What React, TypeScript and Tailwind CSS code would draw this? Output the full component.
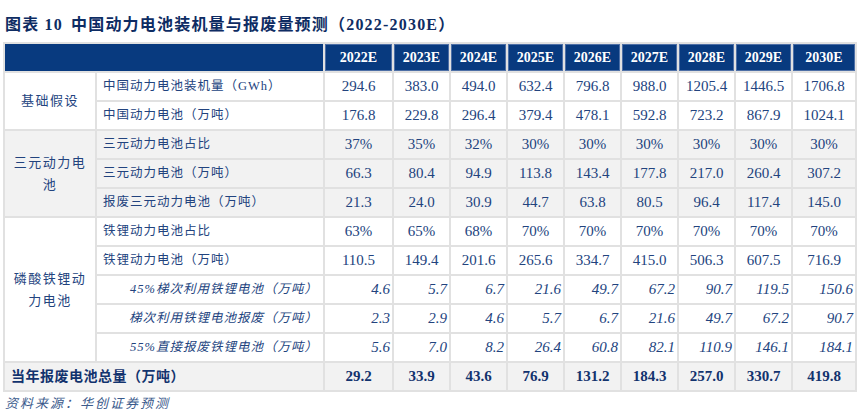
const years = ["2022E", "2023E", "2024E", "2025E", "2026E", "2027E", "2028E", "2029E", "2030E"]

type Row = { label: string; values: string[]; italic?: boolean }
type Group = { name: string[]; shaded: boolean; rows: Row[] }

const groups: Group[] = [
  {
    name: ["基础假设"],
    shaded: false,
    rows: [
      { label: "中国动力电池装机量（GWh）", values: ["294.6", "383.0", "494.0", "632.4", "796.8", "988.0", "1205.4", "1446.5", "1706.8"] },
      { label: "中国动力电池（万吨）", values: ["176.8", "229.8", "296.4", "379.4", "478.1", "592.8", "723.2", "867.9", "1024.1"] },
    ],
  },
  {
    name: ["三元动力电", "池"],
    shaded: true,
    rows: [
      { label: "三元动力电池占比", values: ["37%", "35%", "32%", "30%", "30%", "30%", "30%", "30%", "30%"] },
      { label: "三元动力电池（万吨）", values: ["66.3", "80.4", "94.9", "113.8", "143.4", "177.8", "217.0", "260.4", "307.2"] },
      { label: "报废三元动力电池（万吨）", values: ["21.3", "24.0", "30.9", "44.7", "63.8", "80.5", "96.4", "117.4", "145.0"] },
    ],
  },
  {
    name: ["磷酸铁锂动", "力电池"],
    shaded: false,
    rows: [
      { label: "铁锂动力电池占比", values: ["63%", "65%", "68%", "70%", "70%", "70%", "70%", "70%", "70%"] },
      { label: "铁锂动力电池（万吨）", values: ["110.5", "149.4", "201.6", "265.6", "334.7", "415.0", "506.3", "607.5", "716.9"] },
      { label: "45%梯次利用铁锂电池（万吨）", italic: true, values: ["4.6", "5.7", "6.7", "21.6", "49.7", "67.2", "90.7", "119.5", "150.6"] },
      { label: "梯次利用铁锂电池报废（万吨）", italic: true, values: ["2.3", "2.9", "4.6", "5.7", "6.7", "21.6", "49.7", "67.2", "90.7"] },
      { label: "55%直接报废铁锂电池（万吨）", italic: true, values: ["5.6", "7.0", "8.2", "26.4", "60.8", "82.1", "110.9", "146.1", "184.1"] },
    ],
  },
]

const totals = ["29.2", "33.9", "43.6", "76.9", "131.2", "184.3", "257.0", "330.7", "419.8"]

const cjk = "font-['Liberation_Serif','Noto_Sans_CJK_SC',serif]"
const cell = "border-2 border-[#e1e1e1] h-[29px] p-0"

export default function App() {
  return (
    <div className={`w-[859px] h-[413px] bg-white pl-[3px] pr-[4px] text-[#22437e] ${cjk}`}>
      {/* Title */}
      <div className="h-[42px] flex items-end gap-[8px] pb-[5px] pl-[2px] text-[16px] font-bold text-[#0e2c63] tracking-[1.2px]">
        <span>图表 10</span>
        <span>中国动力电池装机量与报废量预测（2022-2030E）</span>
      </div>

      <table className="w-[852px] table-fixed border-collapse">
        <colgroup>
          <col className="w-[92px]" />
          <col className="w-[228px]" />
          <col className="w-[69px]" />
          {years.slice(1, 8).map((y) => (
            <col key={y} className="w-[57px]" />
          ))}
          <col className="w-[64px]" />
        </colgroup>
        <thead>
          <tr className="bg-[#083a7f]">
            <th colSpan={2} className={`${cell} h-[28px]`} />
            {years.map((y) => (
              <th
                key={y}
                className={`${cell} h-[28px] text-white text-[14px] font-bold shadow-[inset_0_0_0_1px_#4d6fa6]`}
              >
                {y}
              </th>
            ))}
          </tr>
        </thead>
        <tbody>
          {groups.map((g) =>
            g.rows.map((r, i) => (
              <tr key={r.label} className={g.shaded ? "bg-[#f2f2f2]" : "bg-white"}>
                {i === 0 && (
                  <td rowSpan={g.rows.length} className={`${cell} text-center text-[13px] tracking-[1.5px] leading-[22px]`}>
                    {g.name.map((n) => (
                      <div key={n}>{n}</div>
                    ))}
                  </td>
                )}
                <td
                  className={`${cell} text-[12.5px] tracking-[1px] ${
                    r.italic ? "italic text-right pr-[5px]" : "pl-[6px]"
                  }`}
                >
                  {r.label}
                </td>
                {r.values.map((v, j) => (
                  <td
                    key={j}
                    className={`${cell} text-[15px] ${r.italic ? "italic text-right pr-[2px]" : "text-center"}`}
                  >
                    {v}
                  </td>
                ))}
              </tr>
            ))
          )}
          <tr className="bg-[#f2f2f2]">
            <td colSpan={2} className={`${cell} pl-[6px] text-[14px] font-bold tracking-[0.5px] text-[#12336e]`}>
              当年报废电池总量（万吨）
            </td>
            {totals.map((v, j) => (
              <td key={j} className={`${cell} text-center text-[15px] font-bold text-[#12336e]`}>
                {v}
              </td>
            ))}
          </tr>
        </tbody>
      </table>

      {/* Source */}
      <div className="pt-[2px] pl-[2px] text-[13px] italic tracking-[2px] text-[#3a5a8c]">
        资料来源：华创证券预测
      </div>
    </div>
  )
}
